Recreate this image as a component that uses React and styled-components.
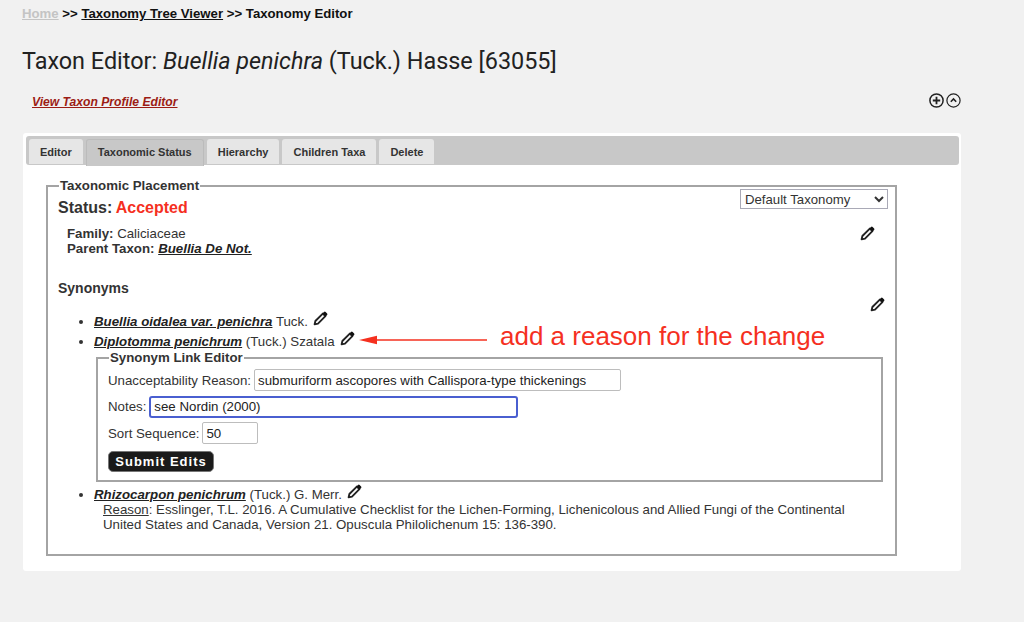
import React from 'react'
import styled, { createGlobalStyle } from 'styled-components'

const GlobalStyle = createGlobalStyle`
  html, body {
    margin: 0;
    background-color: #f1f1f1;
    color: #333;
    font-family: "Liberation Sans", Arial, sans-serif;
    font-size: 13.27px;
  }
`
const Page = styled.div`
  position: relative;
  height: 622px;
  overflow: hidden;
  padding: 6px 63px 0 22px;
  box-sizing: border-box;
`
const Crumbs = styled.div`
  height: 15px;
  line-height: 15px;
  font-size: 13.2px;
  font-weight: bold;
  color: #111;
`
const CrumbLink = styled.a`
  color: ${p => (p.$muted ? '#c4c4c4' : '#111')};
  text-decoration: underline;
`
const Title = styled.h1`
  margin: 26px 0 0;
  height: 28px;
  line-height: 28px;
  font-family: Roboto, sans-serif;
  font-size: 23.4px;
  font-weight: 400;
  color: #212121;
`
const ProfileRow = styled.div`
  display: flex;
  align-items: center;
  justify-content: space-between;
  margin-top: 15px;
  height: 24px;
  padding: 0 0 0 10px;
`
const ProfileLink = styled.a`
  font-size: 12.15px;
  font-weight: bold;
  font-style: italic;
  color: #9c1c14;
  text-decoration: underline;
`
const RoundIcons = styled.div`
  display: flex;
  gap: 2px;
  margin-top: -4px;
`
const Card = styled.main`
  margin: 19px 0 0 1px;
  width: 938px;
  height: 438px;
  box-sizing: border-box;
  padding: 3px;
  background: #fff;
  border-radius: 3px;
`
const TabBar = styled.div`
  display: flex;
  gap: 3px;
  height: 29px;
  width: 933px;
  padding: 3px 0 0 3px;
  box-sizing: border-box;
  background: #c8c8c8;
  border-radius: 3px;
`
const Tab = styled.div`
  height: ${p => (p.$active ? '27px' : '25px')};
  line-height: ${p => (p.$active ? '25px' : '27px')};
  padding: 0 ${p => p.$pad}px;
  font-size: 11px;
  font-weight: bold;
  color: #333;
  background: ${p => (p.$active ? '#c8c8c8' : '#e6e6e6')};
  border: ${p => (p.$active ? '1px solid #bbb' : 'none')};
  border-bottom: none;
  box-sizing: border-box;
  border-radius: 3px 3px 0 0;
`
const Placement = styled.fieldset`
  position: relative;
  width: 851px;
  height: 378px;
  box-sizing: border-box;
  margin: 13px 0 0 20px;
  padding: 0 7px 0 10px;
  border: 2px solid #a4a4a4;
  min-width: 0;
`
const Legend = styled.legend`
  padding: 0 1px;
  margin-left: 1px;
  height: 15px;
  line-height: 15px;
  font-size: 13.27px;
  font-weight: bold;
  color: #333;
`
const StatusRow = styled.div`
  display: flex;
  justify-content: space-between;
  align-items: flex-start;
  height: 26px;
`
const Status = styled.div`
  margin-top: 6px;
  font-size: 16px;
  font-weight: bold;
  line-height: 18px;
`
const Accepted = styled.span`
  margin-left: -1px;
  color: #f5301f;
`
const TaxonomySelect = styled.select`
  width: 148px;
  height: 20px;
  margin-top: -4px;
  padding: 0;
  font-family: "Liberation Sans", Arial, sans-serif;
  font-size: 13.2px;
  color: #333;
  background: #fff;
  border: 1px solid #a9a9b6;
  border-radius: 0;
`
const Details = styled.div`
  display: flex;
  justify-content: space-between;
  align-items: flex-start;
  margin: 7px 13px 0 9px;
  line-height: 15px;
`
const SectionHead = styled.div`
  margin-top: 24px;
  font-size: 14px;
  font-weight: bold;
  line-height: 16px;
`
const TaxonLink = styled.a`
  font-weight: bold;
  font-style: italic;
  color: #222;
  text-decoration: underline;
`
const SynonymList = styled.ul`
  margin: 10px 0 0;
  padding: 0 0 0 36px;
`
const Synonym = styled.li`
  line-height: ${p => p.$tall || 20}px;
`
const EditIcon = styled.svg`
  display: inline-block;
  vertical-align: ${p => p.$lift || 0}px;
  margin: ${p => (p.$inline ? '-6px 0 -6px 5px' : '0')};
`
const RightEdit = styled.div`
  display: flex;
  justify-content: flex-end;
  margin: 1px 3px 0 0;
  height: 5px;
`
const LinkEditor = styled.fieldset`
  width: 787px;
  height: 132px;
  box-sizing: border-box;
  margin: -2px 0 5px 2px;
  padding: 2px 10px 0;
  border: 2px solid #a4a4a4;
  min-width: 0;
`
const FormRow = styled.div`
  display: flex;
  align-items: center;
  gap: 3px;
  height: 26.5px;
  line-height: 15px;
`
const TextInput = styled.input`
  width: ${p => p.$w}px;
  height: 22px;
  box-sizing: border-box;
  padding: 0 3px;
  font-family: "Liberation Sans", Arial, sans-serif;
  font-size: 13.27px;
  color: #222;
  background: #fff;
  border: ${p => (p.$focus ? '2px solid #4a5fd0' : '1px solid #bdbdbd')};
  border-radius: ${p => (p.$focus ? '3px' : '2px')};
  outline: none;
`
const SubmitButton = styled.button`
  display: block;
  width: 106px;
  height: 21px;
  margin-top: 4px;
  padding: 0;
  font-family: "Liberation Sans", Arial, sans-serif;
  font-size: 13px;
  font-weight: bold;
  letter-spacing: 1px;
  color: #fff;
  background: #1a1a1a;
  border: 1px solid #777;
  border-radius: 5px;
`
const Reason = styled.div`
  margin-left: 9px;
  line-height: 15px;
  width: 760px;
`
const Underlined = styled.span`
  text-decoration: underline;
`
const Annotation = styled.div`
  position: absolute;
  left: 359px;
  top: 320px;
  display: flex;
  align-items: flex-start;
  gap: 13px;
  font-size: 26px;
  line-height: 32px;
  color: #f5301f;
`
const ArrowIcon = styled.svg`
  margin-top: 15px;
`

const Pencil = props => (
  <EditIcon width="15" height="15" viewBox="0 0 15 15" {...props}>
    <path d="M2.4 10 9.8 2.6l2.6 2.6L5 12.6 1.6 13.4z" fill="#fff" stroke="#222" strokeWidth="1.9" strokeLinejoin="round" />
    <path d="M9.4 2.4 11 .9a1.2 1.2 0 0 1 1.6 0l1.5 1.5a1.2 1.2 0 0 1 0 1.6l-1.5 1.6z" fill="#111" />
  </EditIcon>
)

const PlusCircle = () => (
  <svg width="15" height="15" viewBox="0 0 15 15">
    <circle cx="7.5" cy="7.5" r="6.6" fill="none" stroke="#222" strokeWidth="1.5" />
    <path d="M7.5 3.8v7.4M3.8 7.5h7.4" stroke="#222" strokeWidth="1.8" />
  </svg>
)

const ChevronCircle = () => (
  <svg width="15" height="15" viewBox="0 0 15 15">
    <circle cx="7.5" cy="7.5" r="6.6" fill="none" stroke="#222" strokeWidth="1.2" />
    <path d="M4.8 8.8 7.5 6l2.7 2.8" fill="none" stroke="#222" strokeWidth="1.6" />
  </svg>
)

const Arrow = () => (
  <ArrowIcon width="128" height="10" viewBox="0 0 128 10">
    <path d="M17 5h111" stroke="#f5301f" strokeWidth="1.4" />
    <path d="M0 5l18-4.3v8.6z" fill="#f5301f" />
  </ArrowIcon>
)

const tabs = [
  { label: 'Editor', pad: 11 },
  { label: 'Taxonomic Status', pad: 11, active: true },
  { label: 'Hierarchy', pad: 11 },
  { label: 'Children Taxa', pad: 11 },
  { label: 'Delete', pad: 11 },
]

const App = () => (
  <Page>
    <GlobalStyle />
    <Crumbs>
      <CrumbLink $muted>Home</CrumbLink> &gt;&gt; <CrumbLink>Taxonomy Tree Viewer</CrumbLink> &gt;&gt; Taxonomy Editor
    </Crumbs>
    <Title>Taxon Editor: <i>Buellia penichra</i> (Tuck.) Hasse [63055]</Title>
    <ProfileRow>
      <ProfileLink>View Taxon Profile Editor</ProfileLink>
      <RoundIcons>
        <PlusCircle />
        <ChevronCircle />
      </RoundIcons>
    </ProfileRow>

    <Card>
      <TabBar>
        {tabs.map(t => (
          <Tab key={t.label} $active={t.active} $pad={t.pad}>{t.label}</Tab>
        ))}
      </TabBar>

      <Placement>
        <Legend>Taxonomic Placement</Legend>
        <StatusRow>
          <Status>Status: <Accepted>Accepted</Accepted></Status>
          <TaxonomySelect defaultValue="default">
            <option value="default">Default Taxonomy</option>
          </TaxonomySelect>
        </StatusRow>
        <Details>
          <div>
            <div><b>Family:</b> Caliciaceae</div>
            <div><b>Parent Taxon:</b> <TaxonLink>Buellia De Not.</TaxonLink></div>
          </div>
          <Pencil />
        </Details>
        <SectionHead>Synonyms</SectionHead>
        <RightEdit>
          <Pencil />
        </RightEdit>
        <SynonymList>
          <Synonym>
            <TaxonLink>Buellia oidalea var. penichra</TaxonLink> Tuck.<Pencil $inline $lift={6} />
          </Synonym>
          <Synonym>
            <TaxonLink>Diplotomma penichrum</TaxonLink> (Tuck.) Szatala<Pencil $inline $lift={6} />
            <LinkEditor>
              <Legend>Synonym Link Editor</Legend>
              <FormRow>
                Unacceptability Reason:
                <TextInput $w={367} defaultValue="submuriform ascopores with Callispora-type thickenings" />
              </FormRow>
              <FormRow>
                Notes:
                <TextInput $w={369} $focus defaultValue="see Nordin (2000)" />
              </FormRow>
              <FormRow>
                Sort Sequence:
                <TextInput $w={56} defaultValue="50" />
              </FormRow>
              <SubmitButton type="button">Submit Edits</SubmitButton>
            </LinkEditor>
          </Synonym>
          <Synonym $tall={15}>
            <TaxonLink>Rhizocarpon penichrum</TaxonLink> (Tuck.) G. Merr.<Pencil $inline $lift={6} />
            <Reason>
              <Underlined>Reason</Underlined>: Esslinger, T.L. 2016. A Cumulative Checklist for the Lichen-Forming, Lichenicolous and Allied Fungi of the Continental United States and Canada, Version 21. Opuscula Philolichenum 15: 136-390.
            </Reason>
          </Synonym>
        </SynonymList>
      </Placement>
    </Card>

    <Annotation>
      <Arrow />
      <span>add a reason for the change</span>
    </Annotation>
  </Page>
)

export default App
